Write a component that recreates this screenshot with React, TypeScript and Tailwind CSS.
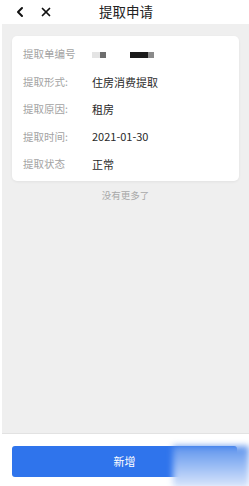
import { ChevronLeft, X } from 'lucide-react';

const rows = [
    { label: '提取单编号', value: null },
    { label: '提取形式:', value: '住房消费提取' },
    { label: '提取原因:', value: '租房' },
    { label: '提取时间:', value: '2021-01-30' },
    { label: '提取状态', value: '正常' },
];

export default function App() {
    return (
        <div
            className="w-[249px] h-[486px] bg-white flex flex-col overflow-hidden"
            style={{ fontFamily: '"Noto Sans CJK SC", "Liberation Sans", sans-serif' }}
        >
            <div className="h-[24px] flex items-center relative shrink-0">
                <ChevronLeft className="ml-[12px] text-[#111]" size={16} strokeWidth={3} />
                <X className="ml-[11px] text-[#111]" size={14} strokeWidth={3} />
                <span className="absolute left-0 right-0 text-center text-[13.5px] text-[#222] leading-none pl-[3px]">
                    提取申请
                </span>
            </div>
            <div className="ml-[2px] h-[410px] bg-[#efefef] border-b border-[#e2e2e2] pt-[12px] px-[10px] shrink-0">
                <div className="bg-white rounded-[5px] shadow-[0_1px_3px_rgba(0,0,0,0.06)] pt-[5px] pb-[3px] px-[11px]">
                    {rows.map(r => (
                        <div key={r.label} className="h-[27.4px] flex items-center leading-none">
                            <span className="w-[69px] text-[10.5px] text-[#a3a3a3]">{r.label}</span>
                            {r.value ? (
                                <span className="text-[11px] text-[#2a2a2a]">{r.value}</span>
                            ) : (
                                <div className="flex items-center">
                                    <span className="w-[8px] h-[6px] bg-[#e4e4e4]" />
                                    <span className="w-[6px] h-[6px] bg-[#6e6e6e]" />
                                    <span className="ml-[24px] w-[18px] h-[6px] bg-[#1a1a1a]" />
                                    <span className="w-[6px] h-[6px] bg-[#8a8a8a]" />
                                </div>
                            )}
                        </div>
                    ))}
                </div>
                <div className="mt-[7px] text-center text-[9.5px] text-[#a8a8a8]">没有更多了</div>
            </div>
            <div className="px-[12px] pt-[12px] relative">
                <div className="h-[31px] rounded-[3px] bg-[#2f74ec] flex items-center justify-center text-white text-[11px]">
                    新增
                </div>
                <div className="absolute left-[173px] top-[12px] w-[76px] h-[42px] bg-gradient-to-b from-[#5e93ec] to-[#dde8fb] blur-[3px]" />
            </div>
        </div>
    );
}
